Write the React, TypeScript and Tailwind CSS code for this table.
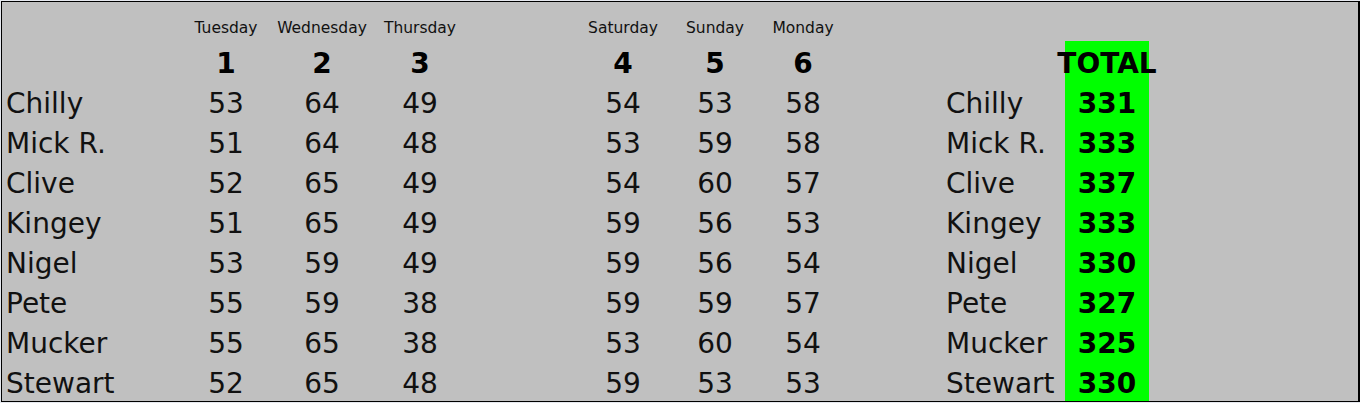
import React from "react";

const rows: [string, number[], number][] = [
  ["Chilly", [53, 64, 49, 54, 53, 58], 331],
  ["Mick R.", [51, 64, 48, 53, 59, 58], 333],
  ["Clive", [52, 65, 49, 54, 60, 57], 337],
  ["Kingey", [51, 65, 49, 59, 56, 53], 333],
  ["Nigel", [53, 59, 49, 59, 56, 54], 330],
  ["Pete", [55, 59, 38, 59, 59, 57], 327],
  ["Mucker", [55, 65, 38, 53, 60, 54], 325],
  ["Stewart", [52, 65, 48, 59, 53, 53], 330],
];

const grid =
  "grid grid-cols-[176px_96px_96px_100px_105px_96px_88px_88px_96px_122px_84px_1fr]";

export default function App() {
  const days = ["Tuesday", "Wednesday", "Thursday", "", "Saturday", "Sunday", "Monday"];
  const nums = ["1", "2", "3", "", "4", "5", "6"];
  return (
    <div
      className="w-[1360px] h-[403px] bg-[#e6e9ef] pt-[1px] pl-[1px] pb-[1px] overflow-hidden"
      style={{ fontFamily: '"DejaVu Sans", Verdana, sans-serif' }}
    >
      <div className="h-[401px] bg-[#c0c0c0] border-t border-l border-b border-r-2 border-black text-[#111] overflow-hidden">
        {/* day names */}
        <div className={`${grid} h-[39px] text-[15.5px] leading-[20px] pt-[16px]`}>
          <div />
          {days.map((d, i) => (
            <div key={i} className="text-center whitespace-nowrap">
              {d}
            </div>
          ))}
          <div />
          <div />
          <div />
          <div />
        </div>
        {/* numbers */}
        <div className={`${grid} h-[42px] text-[28px] leading-[40px] font-bold text-black`}>
          <div />
          {nums.map((n, i) => (
            <div key={i} className="text-center pt-[3px]">
              {n}
            </div>
          ))}
          <div />
          <div />
          <div className="bg-[#00ff00] pt-[3px] flex justify-center">
            <span className="whitespace-nowrap">TOTAL</span>
          </div>
          <div />
        </div>
        {rows.map(([name, vals, total]) => (
          <div key={name} className={`${grid} h-[40px] text-[28px] leading-[40px]`}>
            <div className="pl-[4px] pt-[1px] whitespace-nowrap">{name}</div>
            <div className="text-center pt-[1px]">{vals[0]}</div>
            <div className="text-center pt-[1px]">{vals[1]}</div>
            <div className="text-center pt-[1px]">{vals[2]}</div>
            <div />
            <div className="text-center pt-[1px]">{vals[3]}</div>
            <div className="text-center pt-[1px]">{vals[4]}</div>
            <div className="text-center pt-[1px]">{vals[5]}</div>
            <div />
            <div className="pl-[3px] pt-[1px] whitespace-nowrap">{name}</div>
            <div className="bg-[#00ff00] text-center pt-[1px] font-bold text-black">{total}</div>
            <div />
          </div>
        ))}
      </div>
    </div>
  );
}
